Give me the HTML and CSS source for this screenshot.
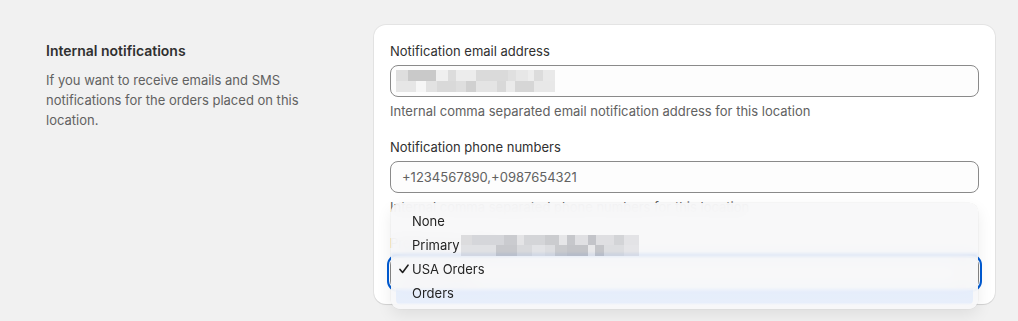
FILE: index.html
```html
<!DOCTYPE html>
<html lang="en">
<head>
	<meta charset="UTF-8">
	<title>Location settings</title>
	<link rel="stylesheet" href="styles.css">
</head>
<body>
	<!-- internal notifications section -->
	<div class="section">
		<div class="section-info">
			<h2 class="section-title">Internal notifications</h2>
			<p class="section-desc">If you want to receive emails and SMS notifications for the orders placed on this location.</p>
		</div>

		<div class="card">
			<div class="field">
				<label class="field-label">Notification email address</label>
				<div class="input">
					<!-- redacted address -->
					<svg class="mosaic" width="159" height="22" viewBox="0 0 159 22">
						<rect x="0" y="0" width="12" height="11" fill="#dedede"/>
						<rect x="12" y="0" width="28" height="11" fill="#c9c9c9"/>
						<rect x="40" y="0" width="12" height="11" fill="#efefef"/>
						<rect x="52" y="0" width="8" height="11" fill="#dcdcdc"/>
						<rect x="60" y="0" width="20" height="11" fill="#ececec"/>
						<rect x="80" y="0" width="32" height="11" fill="#dadada"/>
						<rect x="112" y="0" width="8" height="11" fill="#e0e0e0"/>
						<rect x="120" y="0" width="12" height="11" fill="#e7e7e7"/>
						<rect x="132" y="0" width="6" height="11" fill="#ededed"/>
						<rect x="138" y="0" width="9" height="11" fill="#dcdcdc"/>
						<rect x="147" y="0" width="12" height="11" fill="#e9e9e9"/>
						<rect x="0" y="11" width="20" height="11" fill="#e6e6e6"/>
						<rect x="20" y="11" width="10" height="11" fill="#f6f6f6"/>
						<rect x="30" y="11" width="11" height="11" fill="#e2e2e2"/>
						<rect x="41" y="11" width="19" height="11" fill="#d9d9d9"/>
						<rect x="60" y="11" width="10" height="11" fill="#dedede"/>
						<rect x="70" y="11" width="10" height="11" fill="#d0d0d0"/>
						<rect x="80" y="11" width="21" height="11" fill="#e4e4e4"/>
						<rect x="101" y="11" width="9" height="11" fill="#d8d8d8"/>
						<rect x="110" y="11" width="9" height="11" fill="#eaeaea"/>
						<rect x="119" y="11" width="19" height="11" fill="#d6d6d6"/>
						<rect x="138" y="11" width="21" height="11" fill="#e8e8e8"/>
					</svg>
				</div>
				<p class="field-help">Internal comma separated email notification address for this location</p>
			</div>

			<div class="field">
				<label class="field-label">Notification phone numbers</label>
				<div class="input"><span class="input-value">+1234567890,+0987654321</span></div>
				<p class="field-help">Internal comma separated phone numbers for this location</p>
			</div>

			<div class="field select-field">
				<label class="field-label">Preferred location</label>
				<div class="select focused">
					<span class="input-value">USA Orders</span>
					<svg class="select-arrow" width="16" height="16" viewBox="0 0 16 16">
						<path d="M5 6.5 8 3.5l3 3M5 9.5l3 3 3-3" fill="none" stroke="#4a4a4a" stroke-width="1.4" stroke-linecap="round" stroke-linejoin="round"/>
					</svg>
				</div>

				<!-- open option list -->
				<ul class="menu">
					<li class="menu-item">None</li>
					<li class="menu-item">Primary<svg class="mosaic" width="178" height="21" viewBox="0 0 178 21">
						<rect x="0" y="0" width="11" height="10" fill="#dcdcde"/>
						<rect x="11" y="0" width="32" height="10" fill="#d5d6da"/>
						<rect x="43" y="0" width="13" height="10" fill="#cacbcf"/>
						<rect x="56" y="0" width="7" height="10" fill="#e4e4e6"/>
						<rect x="63" y="0" width="21" height="10" fill="#d4d5d8"/>
						<rect x="84" y="0" width="14" height="10" fill="#cbcccf"/>
						<rect x="98" y="0" width="8" height="10" fill="#e6e6e8"/>
						<rect x="106" y="0" width="8" height="10" fill="#c6c7cb"/>
						<rect x="114" y="0" width="13" height="10" fill="#e0e0e3"/>
						<rect x="127" y="0" width="8" height="10" fill="#c3c4c9"/>
						<rect x="135" y="0" width="18" height="10" fill="#dfdfe2"/>
						<rect x="153" y="0" width="10" height="10" fill="#d3d4d7"/>
						<rect x="163" y="0" width="15" height="10" fill="#e3e3e6"/>
						<rect x="0" y="10" width="35" height="11" fill="#e0e1e4"/>
						<rect x="35" y="10" width="21" height="11" fill="#c7c8cc"/>
						<rect x="56" y="10" width="15" height="11" fill="#d8d9dc"/>
						<rect x="71" y="10" width="13" height="11" fill="#e2e3e6"/>
						<rect x="84" y="10" width="10" height="11" fill="#dcdde0"/>
						<rect x="94" y="10" width="12" height="11" fill="#c9cacd"/>
						<rect x="106" y="10" width="21" height="11" fill="#c3c4c8"/>
						<rect x="127" y="10" width="7" height="11" fill="#e8e8ea"/>
						<rect x="134" y="10" width="9" height="11" fill="#c4c5c9"/>
						<rect x="143" y="10" width="20" height="11" fill="#dcdde0"/>
						<rect x="163" y="10" width="15" height="11" fill="#e5e5e8"/>
					</svg></li>
					<li class="menu-item checked">
						<svg class="check" width="10" height="10" viewBox="0 0 10 10">
							<path d="M1 5.4 3.6 8.4 9 1.2" fill="none" stroke="#1f1f1f" stroke-width="1.6" stroke-linecap="round" stroke-linejoin="round"/>
						</svg>USA Orders
					</li>
					<li class="menu-item hover">Orders</li>
				</ul>
			</div>
		</div>
	</div>
</body>
</html>
```

FILE: styles.css
```css
*{
	padding: 0;
	margin: 0;
	box-sizing: border-box;
}
body{
	background: #f1f1f1;
	font-family: Inter, "Liberation Sans", sans-serif;
	font-size: 13px;
	line-height: 20px;
	color: #303030;
	height: 321px;
	overflow: hidden;
}
/*page section*/
.section{
	display: flex;
	gap: 20px;
	padding: 25px 23px 0 46px;
}
.section-info{
	width: 308px;
	flex-shrink: 0;
	padding-top: 16px;
}
.section-title{
	font-size: 14px;
	font-weight: 600;
	line-height: 20px;
	color: #303030;
	margin-bottom: 9px;
}
.section-desc{
	width: 265px;
	color: #616161;
}
/*card*/
.card{
	flex: 1;
	background: #fff;
	border-radius: 12px;
	padding: 16px 16px 15px;
	box-shadow: 0 0 0 1px rgba(0,0,0,.05), 0 1px 1px rgba(0,0,0,.08);
	display: flex;
	flex-direction: column;
	gap: 16px;
}
.field-label{
	display: block;
	margin-bottom: 4px;
	color: #303030;
}
.input,
.select{
	height: 32px;
	border: 1px solid #8a8a8a;
	border-radius: 8px;
	background: #fdfdfd;
	display: flex;
	align-items: center;
	padding: 0 11px;
}
.input .mosaic{
	margin-left: -6px;
	display: block;
}
.input-value{
	color: #616161;
}
.field-help{
	margin-top: 4px;
	color: #616161;
}
/*select with open list*/
.select-field{
	position: relative;
}
.select{
	justify-content: space-between;
	padding-right: 8px;
}
.select.focused{
	outline: 2px solid #005bd3;
	outline-offset: 1px;
}
.select-arrow{
	display: block;
}
.menu{
	position: absolute;
	left: 1px;
	right: 1px;
	top: -30px;
	height: 106px;
	list-style: none;
	padding: 6px 5px 4px;
	border-radius: 9px;
	background: rgba(247,247,248,.92);
	backdrop-filter: blur(8px);
	box-shadow: 0 0 0 .5px rgba(0,0,0,.06), 0 6px 16px rgba(0,0,0,.08);
}
.menu::before{
	/* focus ring of the select seen through the list */
	content: "";
	position: absolute;
	left: 0;
	right: 0;
	top: 50px;
	height: 4px;
	background: rgba(0,91,211,.07);
	filter: blur(1px);
}
.menu-item{
	height: 24px;
	line-height: 24px;
	padding-left: 16px;
	display: flex;
	align-items: center;
	color: #242424;
	border-radius: 5px;
}
.menu-item .mosaic{
	margin-left: 1px;
	display: block;
	flex-shrink: 0;
}
.menu-item .check{
	margin-left: -13px;
	margin-right: 3px;
	display: block;
}
.hover{
	background: linear-gradient(rgba(0,0,0,0) 25%, rgba(214,228,252,.5) 45%, rgba(214,228,252,.5) 90%, rgba(0,0,0,0));
}
```
